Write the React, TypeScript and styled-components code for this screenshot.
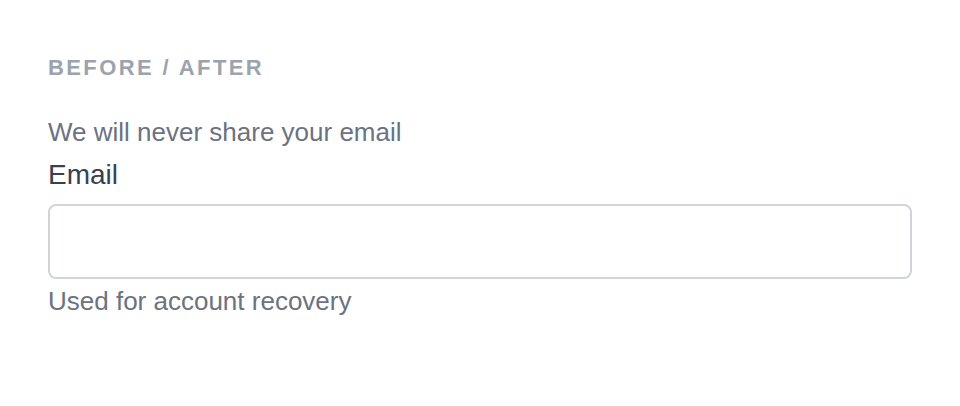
import { createGlobalStyle } from 'styled-components';
import styled from 'styled-components';

const GlobalStyle = createGlobalStyle`
  body {
    margin: 0;
    background: #ffffff;
    font-family: 'Liberation Sans', Arial, sans-serif;
  }
`;

const Page = styled.div`
  padding: 54px 48px 48px;
`;

const SectionTitle = styled.h2`
  margin: 0 0 34px;
  font-size: 22px;
  font-weight: 700;
  letter-spacing: 2.4px;
  line-height: 28px;
  color: #9ca3af;
`;

const Field = styled.div`
  display: flex;
  flex-direction: column;
`;

const Hint = styled.p`
  margin: 0;
  font-size: 26px;
  line-height: 32px;
  color: #6b7280;
`;

const Label = styled.label`
  font-size: 28px;
  line-height: 34px;
  color: #374151;
  margin: 10px 0 12px;
`;

const Input = styled.input`
  box-sizing: border-box;
  width: 100%;
  height: 75px;
  border: 2px solid #d1d5db;
  border-radius: 8px;
  padding: 0 16px;
  font-size: 24px;
  font-family: inherit;
  outline: none;
  margin-bottom: 6px;
`;

export default function App() {
  return (
    <>
      <GlobalStyle />
      <Page>
        <SectionTitle>BEFORE / AFTER</SectionTitle>
        <Field>
          <Hint>We will never share your email</Hint>
          <Label htmlFor="email">Email</Label>
          <Input id="email" type="email" />
          <Hint>Used for account recovery</Hint>
        </Field>
      </Page>
    </>
  );
}
